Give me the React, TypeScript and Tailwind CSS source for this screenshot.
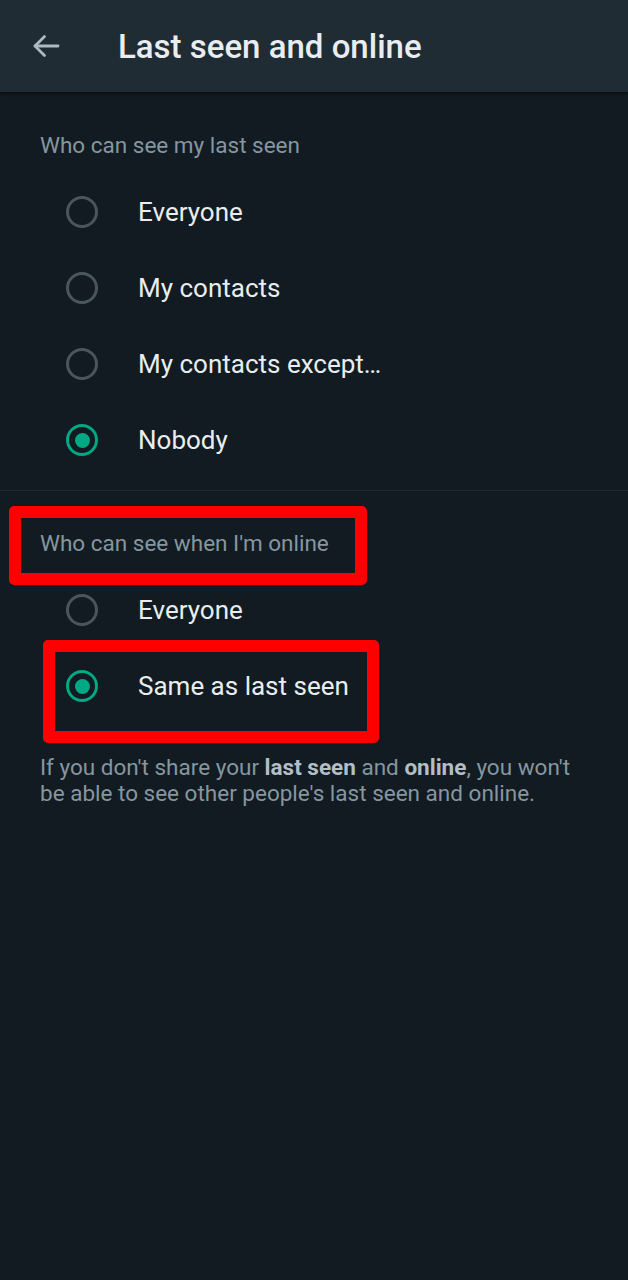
import { useState } from "react";

type Option = { id: string; label: string };

const lastSeenOptions: Option[] = [
  { id: "everyone", label: "Everyone" },
  { id: "contacts", label: "My contacts" },
  { id: "except", label: "My contacts except…" },
  { id: "nobody", label: "Nobody" },
];

const onlineOptions: Option[] = [
  { id: "everyone", label: "Everyone" },
  { id: "same", label: "Same as last seen" },
];

function Radio({ checked }: { checked: boolean }) {
  return (
    <span
      className={`flex h-[32px] w-[32px] items-center justify-center rounded-full border-[3px] ${
        checked ? "border-[#00a884]" : "border-[#4a565d]"
      }`}
    >
      {checked && <span className="h-[15px] w-[15px] rounded-full bg-[#00a884]" />}
    </span>
  );
}

function RadioRow({
  option,
  checked,
  onSelect,
}: {
  option: Option;
  checked: boolean;
  onSelect: () => void;
}) {
  return (
    <button
      onClick={onSelect}
      className="flex h-[76px] w-full items-center pl-[66px] text-left"
    >
      <Radio checked={checked} />
      <span className="ml-[40px] text-[26px] leading-none text-[#e9edef]">
        {option.label}
      </span>
    </button>
  );
}

export default function App() {
  const [lastSeen, setLastSeen] = useState("nobody");
  const [online, setOnline] = useState("same");

  return (
    <div
      className="relative min-h-[1280px] w-[628px] bg-[#111b21]"
      style={{ fontFamily: "Roboto, 'Noto Sans', sans-serif" }}
    >
      {/* Header */}
      <div className="flex h-[92px] items-center bg-[#1f2c34] shadow-[0_2px_3px_rgba(0,0,0,0.45)]">
        <svg
          width="28"
          height="24"
          viewBox="0 0 28 24"
          className="ml-[32px]"
          fill="none"
          stroke="#aebac1"
          strokeWidth="2.8"
          strokeLinecap="round"
          strokeLinejoin="round"
        >
          <path d="M26 12H3" />
          <path d="M12.5 2.5L3 12l9.5 9.5" />
        </svg>
        <h1 className="ml-[58px] text-[33px] font-medium leading-none text-[#e9edef]">
          Last seen and online
        </h1>
      </div>

      {/* Last seen */}
      <div className="pt-[39px] pb-[12px]">
        <div className="px-[40px] text-[22.5px] leading-[28px] text-[#8696a0]">
          Who can see my last seen
        </div>
        <div className="mt-[15px]">
          {lastSeenOptions.map((o) => (
            <RadioRow
              key={o.id}
              option={o}
              checked={lastSeen === o.id}
              onSelect={() => setLastSeen(o.id)}
            />
          ))}
        </div>
      </div>

      <div className="h-px bg-[#1f2a31]" />

      {/* Online */}
      <div className="pt-[38px]">
        <div className="px-[40px] text-[22.5px] leading-[28px] text-[#8696a0]">
          Who can see when I'm online
        </div>
        <div className="mt-[15px]">
          {onlineOptions.map((o) => (
            <RadioRow
              key={o.id}
              option={o}
              checked={online === o.id}
              onSelect={() => setOnline(o.id)}
            />
          ))}
        </div>
        <p className="mt-[30px] whitespace-nowrap px-[40px] text-[22.5px] leading-[26px] text-[#8696a0]">
          If you don't share your{" "}
          <span className="font-bold text-[#b4bec4]">last seen</span> and{" "}
          <span className="font-bold text-[#b4bec4]">online</span>, you won't
          <br />
          be able to see other people's last seen and online.
        </p>
      </div>

      {/* Annotation boxes */}
      <div className="pointer-events-none absolute left-[9px] top-[506px] h-[79px] w-[358px] rounded-[5px] border-[12px] border-[#ff0000]" />
      <div className="pointer-events-none absolute left-[43px] top-[640px] h-[103px] w-[336px] rounded-[5px] border-[12px] border-[#ff0000]" />
    </div>
  );
}
